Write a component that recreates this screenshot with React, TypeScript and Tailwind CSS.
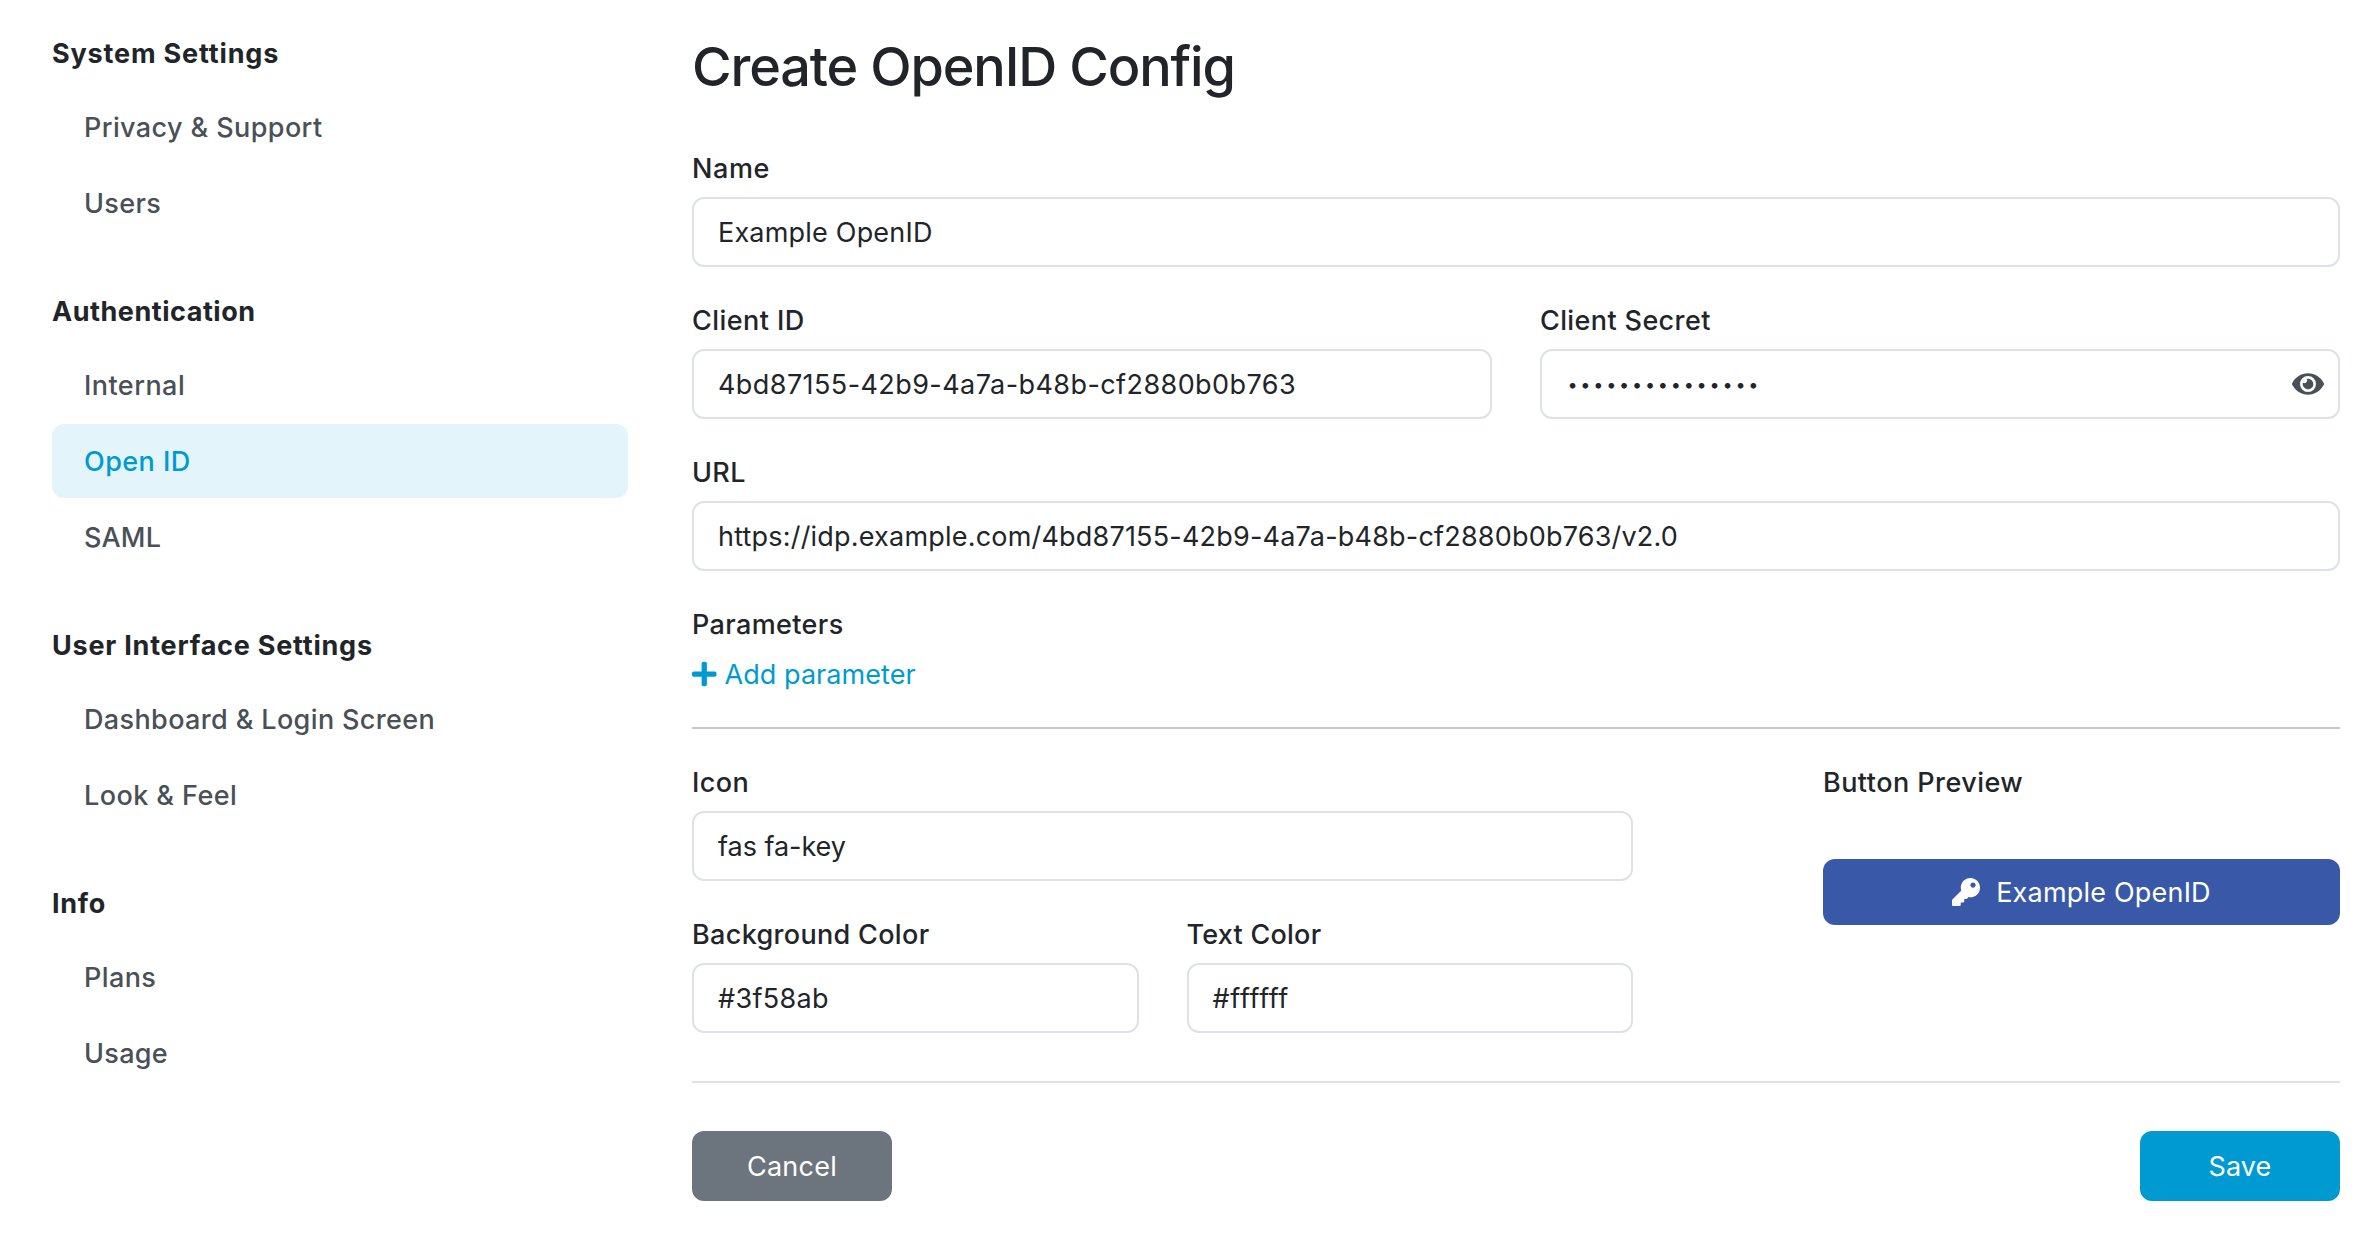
import type { ReactNode } from "react";
import { FaEye, FaKey, FaPlus } from "react-icons/fa";

type NavItem = { text: string; spacing: string; active?: boolean };
type NavGroup = { title: string; spacing: string; items: NavItem[] };

const groups: NavGroup[] = [
  {
    title: "System Settings",
    spacing: "tracking-[0.83px]",
    items: [
      { text: "Privacy & Support", spacing: "tracking-[0.4px]" },
      { text: "Users", spacing: "tracking-[0.35px]" },
    ],
  },
  {
    title: "Authentication",
    spacing: "tracking-[0.53px]",
    items: [
      { text: "Internal", spacing: "tracking-[0.45px]" },
      { text: "Open ID", spacing: "tracking-[0.45px]", active: true },
      { text: "SAML", spacing: "tracking-[0.2px]" },
    ],
  },
  {
    title: "User Interface Settings",
    spacing: "tracking-[0.77px]",
    items: [
      { text: "Dashboard & Login Screen", spacing: "tracking-[0.37px]" },
      { text: "Look & Feel", spacing: "tracking-[0.43px]" },
    ],
  },
  {
    title: "Info",
    spacing: "tracking-[0.7px]",
    items: [
      { text: "Plans", spacing: "tracking-[0.4px]" },
      { text: "Usage", spacing: "tracking-[0.3px]" },
    ],
  },
];

function Sidebar() {
  return (
    <nav className="flex w-[576px] shrink-0 flex-col gap-[50px] pt-8">
      {groups.map((group) => (
        <section key={group.title}>
          <h2 className={`mb-4 h-[42px] font-bold leading-[44px] ${group.spacing}`}>{group.title}</h2>
          <ul className="flex flex-col gap-0.5">
            {group.items.map((item) => (
              <li
                key={item.text}
                className={`h-[74px] rounded-xl pl-8 font-medium leading-[76px] ${item.spacing} ${
                  item.active ? "bg-[#e3f4fb] text-[#009ad3]" : "text-[#495057]"
                }`}
              >
                {item.text}
              </li>
            ))}
          </ul>
        </section>
      ))}
    </nav>
  );
}

function Label({ children, spacing = "tracking-[0.38px]" }: { children: ReactNode; spacing?: string }) {
  return <div className={`h-[42px] whitespace-nowrap font-medium leading-[44px] ${spacing}`}>{children}</div>;
}

function Field({
  label,
  labelSpacing,
  spacing = "tracking-[0.2px]",
  adornment,
  children,
}: {
  label: string;
  labelSpacing?: string;
  spacing?: string;
  adornment?: ReactNode;
  children: ReactNode;
}) {
  return (
    <div className="flex min-w-0 flex-1 flex-col gap-2">
      <Label spacing={labelSpacing}>{label}</Label>
      <div className="flex h-[70px] items-center justify-between rounded-xl border-2 border-[#dee2e6] bg-white pl-6 pr-[14px]">
        <span className={`whitespace-nowrap pt-0.5 leading-[64px] ${spacing}`}>{children}</span>
        {adornment}
      </div>
    </div>
  );
}

function MaskedValue({ length }: { length: number }) {
  return (
    <span className="flex">
      {Array.from({ length }, (_, i) => (
        <span key={i} className="flex w-[12.93px] justify-center text-[18px] tracking-normal">
          •
        </span>
      ))}
    </span>
  );
}

export default function App() {
  return (
    <div className="flex h-[1240px] w-[2372px] gap-16 bg-white pl-[52px] pr-8 font-['Inter',sans-serif] text-[27px] text-[#212529]">
      <Sidebar />
      <main className="flex min-w-0 flex-1 flex-col pt-[33px]">
        <h1 className="mb-[47px] h-[67px] text-[54px] font-[530] leading-[67px] tracking-[-1.15px]">
          Create OpenID Config
        </h1>

        <div className="flex flex-col gap-8">
          <div className="flex">
            <Field label="Name" labelSpacing="tracking-[0.6px]">Example OpenID</Field>
          </div>
          <div className="flex gap-12">
            <Field label="Client ID" labelSpacing="tracking-[0.45px]" spacing="tracking-[0.42px]">
              4bd87155-42b9-4a7a-b48b-cf2880b0b763
            </Field>
            <Field label="Client Secret" adornment={<FaEye className="size-8 text-[#495057]" />}>
              <MaskedValue length={15} />
            </Field>
          </div>
          <div className="flex">
            <Field label="URL" spacing="tracking-[0.2px]">
              https://idp.example.com/4bd87155-42b9-4a7a-b48b-cf2880b0b763/v2.0
            </Field>
          </div>
          <div className="flex flex-col gap-2">
            <Label>Parameters</Label>
            <div className="flex h-[42px] items-center gap-2 text-[#009ad3]">
              <FaPlus className="h-7 w-[24.5px]" />
              <span className="pt-0.5 leading-10 tracking-[0.06px]">Add parameter</span>
            </div>
          </div>
        </div>

        <hr className="my-8 border-t-2 border-[#c7c8c9]" />

        <div className="flex justify-between">
          <div className="flex w-[941px] flex-col gap-8">
            <div className="flex">
              <Field label="Icon" spacing="tracking-[-0.04px]">fas fa-key</Field>
            </div>
            <div className="flex gap-12">
              <Field label="Background Color" labelSpacing="tracking-[0.33px]" spacing="tracking-[0.32px]">
                #3f58ab
              </Field>
              <Field label="Text Color" labelSpacing="tracking-[0.25px]" spacing="tracking-[0.68px]">#ffffff</Field>
            </div>
          </div>
          <div className="flex w-[517px] flex-col gap-14">
            <Label spacing="tracking-[0.45px]">Button Preview</Label>
            <button className="flex h-[66px] w-full items-center justify-center gap-4 rounded-xl bg-[#3a58a8] text-white">
              <FaKey className="size-7" />
              <span className="pt-0.5 tracking-[0.2px]">Example OpenID</span>
            </button>
          </div>
        </div>

        <hr className="my-12 border-t-2 border-[#dee2e6]" />

        <div className="flex justify-between">
          <button className="h-[70px] w-[200px] rounded-xl bg-[#6c757d] pt-0.5 tracking-[0.28px] text-white">Cancel</button>
          <button className="h-[70px] w-[200px] rounded-xl bg-[#009ad3] pt-0.5 tracking-[0.12px] text-white">Save</button>
        </div>
      </main>
    </div>
  );
}
